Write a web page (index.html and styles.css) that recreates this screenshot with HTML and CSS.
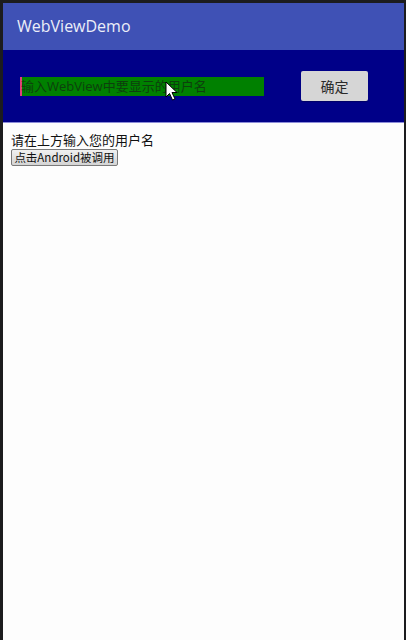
FILE: index.html
```html
<!DOCTYPE html>
<html>
<head>
<meta charset="utf-8">
<link rel="stylesheet" href="styles.css">
</head>
<body>
<div class="frame">
  <div class="screen">
    <header class="toolbar"><span class="title">WebViewDemo</span></header>
    <section class="native">
      <div class="input"><span class="caret"></span><span class="placeholder">输入WebView中要显示的用户名</span></div>
      <button class="ok">确定</button>
    </section>
    <div class="divider"></div>
    <main class="web">
      <div class="msg">请在上方输入您的用户名</div>
      <button class="callbtn">点击Android被调用</button>
    </main>
  </div>
  <svg class="pointer" width="14" height="20" viewBox="0 0 14 20">
    <path d="M1 1 L1 16 L4.5 12.5 L7.5 19 L10 18 L7 11.5 L12 11.5 Z" fill="#fff" stroke="#000" stroke-width="1" stroke-linejoin="miter"/>
  </svg>
</div>
</body>
</html>
```
FILE: styles.css
```css
html, body {
  margin: 0;
  padding: 0;
  background: #1c1c1e;
}
.frame {
  position: relative;
  width: 406px;
  height: 640px;
  box-sizing: border-box;
  padding: 3px 2px 0 3px;
  background: #1c1c1e;
}
.screen {
  height: 637px;
  background: #fdfdfd;
  display: flex;
  flex-direction: column;
}
.toolbar {
  height: 47px;
  background: #3f51b5;
  display: flex;
  align-items: center;
  padding-left: 14px;
}
.title {
  font-family: "Open Sans", "Noto Sans", sans-serif;
  font-size: 16px;
  color: #eceef8;
  position: relative;
  top: -1px;
}
.native {
  height: 72px;
  background: #000088;
  display: flex;
  align-items: center;
  padding-left: 17px;
}
.input {
  width: 244px;
  height: 19px;
  background: #008000;
  display: flex;
  align-items: center;
  overflow: hidden;
  white-space: nowrap;
}
.caret {
  width: 2px;
  height: 19px;
  background: #e0407a;
  flex: none;
}
.placeholder {
  font-family: "Open Sans", "Noto Sans CJK SC", sans-serif;
  font-size: 13px;
  line-height: 19px;
  color: #0d3f0d;
  margin-left: -1px;
}
.ok {
  margin-left: 37px;
  width: 67px;
  height: 30px;
  border: none;
  border-radius: 2px;
  background: #d6d6d6;
  font-family: "Noto Sans CJK SC", sans-serif;
  font-size: 14px;
  color: #2a2a2a;
  padding: 0;
  box-shadow: 0 1px 1px rgba(0,0,0,0.25);
}
.divider {
  height: 1px;
  background: #8c8cd8;
}
.web {
  flex: 1;
  padding: 8px;
}
.msg {
  font-family: "Noto Sans CJK SC", sans-serif;
  font-size: 13px;
  line-height: 17px;
  color: #111;
}
.callbtn {
  display: block;
  margin-top: 1px;
  width: 107px;
  height: 17px;
  padding: 0;
  border: 1px solid #7a7a7a;
  border-radius: 2px;
  background: linear-gradient(#f0f0f0, #d4d4d4);
  font-family: "Noto Sans CJK SC", sans-serif;
  font-size: 11.5px;
  line-height: 15px;
  color: #111;
}
.pointer {
  position: absolute;
  left: 165px;
  top: 81px;
}
```
